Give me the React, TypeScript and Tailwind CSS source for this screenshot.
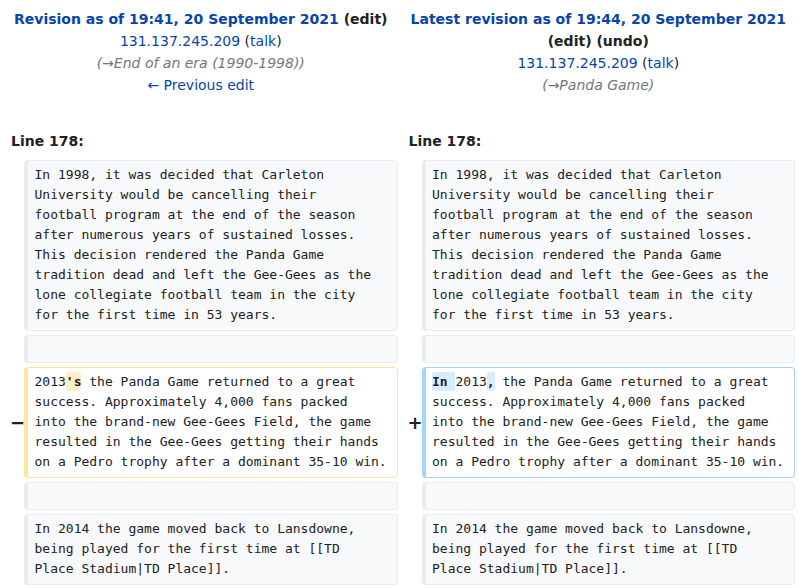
import React from 'react'

const sans = { fontFamily: '"DejaVu Sans", sans-serif' }
const mono = { fontFamily: '"DejaVu Sans Mono", monospace' }

const firstPara = [
    'In 1998, it was decided that Carleton',
    'University would be cancelling their',
    'football program at the end of the season',
    'after numerous years of sustained losses.',
    'This decision rendered the Panda Game',
    'tradition dead and left the Gee-Gees as the',
    'lone collegiate football team in the city',
    'for the first time in 53 years.',
].join('\n')

const lastPara = [
    'In 2014 the game moved back to Lansdowne,',
    'being played for the first time at [[TD',
    'Place Stadium|TD Place]].',
].join('\n')

const restOfPanda =
    ' the Panda Game returned to a great\nsuccess. Approximately 4,000 fans packed\ninto the brand-new Gee-Gees Field, the game\nresulted in the Gee-Gees getting their hands\non a Pedro trophy after a dominant 35-10 win.'

function Ctx({ children }: { children?: React.ReactNode }) {
    return (
        <div
            className="bg-[#f8f9fa] border border-[#eaecf0] border-l-4 rounded-[4px] px-[6.5px] pt-[4px] pb-[5px] text-[13px] leading-[20px] text-[#202122] min-h-[28px] whitespace-pre overflow-hidden"
            style={mono}
        >
            {children}
        </div>
    )
}

function Changed({ kind, children }: { kind: 'del' | 'add'; children: React.ReactNode }) {
    const border = kind === 'del' ? 'border-[#ffe49c]' : 'border-[#a3d3ff]'
    return (
        <div
            className={`bg-white border ${border} border-l-4 rounded-[4px] px-[6.5px] pt-[4px] pb-[5px] text-[13px] leading-[20px] text-[#202122] whitespace-pre overflow-hidden`}
            style={mono}
        >
            {children}
        </div>
    )
}

function Marker({ sign }: { sign: string }) {
    return (
        <div className="flex items-center pl-[6px] text-[18px] font-bold text-[#202122] whitespace-nowrap" style={sans}>
            {sign}
        </div>
    )
}

export default function App() {
    return (
        <div className="w-[799px] h-[588px] overflow-hidden bg-white text-[#202122] text-[14px]" style={sans}>
            {/* Revision headers */}
            <div className="grid grid-cols-[16px_1fr_16px_1fr] gap-x-[4px] px-[4px] pt-[8px]">
                <div className="col-span-2 text-center leading-[22px]">
                    <div className="font-bold">
                        <a className="text-[#0645ad]">Revision as of 19:41, 20 September 2021</a>{' '}
                        <span>(<a className="text-[#202122]">edit</a>)</span>
                    </div>
                    <div>
                        <a className="text-[#0645ad]">131.137.245.209</a> (<a className="text-[#0645ad]">talk</a>)
                    </div>
                    <div className="italic text-[#72777d]">(→End of an era (1990-1998))</div>
                    <div>
                        <a className="text-[#0645ad]">← Previous edit</a>
                    </div>
                </div>
                <div className="col-span-2 text-center leading-[22px]">
                    <div className="font-bold">
                        <a className="text-[#0645ad]">Latest revision as of 19:44, 20 September 2021</a>
                    </div>
                    <div className="font-bold">
                        (<a>edit</a>) (<a>undo</a>)
                    </div>
                    <div>
                        <a className="text-[#0645ad]">131.137.245.209</a> (<a className="text-[#0645ad]">talk</a>)
                    </div>
                    <div className="italic text-[#72777d]">(→Panda Game)</div>
                </div>
            </div>

            {/* Diff body */}
            <div className="grid grid-cols-[16px_1fr_16px_1fr] gap-x-[4px] gap-y-[4px] px-[4px] mt-[34px]">
                <div className="col-span-2 font-bold leading-[22px] px-[7px] mb-[4px]">Line 178:</div>
                <div className="col-span-2 font-bold leading-[22px] px-[7px] mb-[4px]">Line 178:</div>

                <div />
                <Ctx>{firstPara}</Ctx>
                <div />
                <Ctx>{firstPara}</Ctx>

                <div />
                <Ctx />
                <div />
                <Ctx />

                <Marker sign="−" />
                <Changed kind="del">
                    2013<span className="bg-[#feeec8] font-bold rounded-[3px] py-[2px]">'s</span>
                    {restOfPanda}
                </Changed>
                <Marker sign="+" />
                <Changed kind="add">
                    <span className="bg-[#d8ecff] font-bold rounded-[3px] py-[2px]">In </span>2013
                    <span className="bg-[#d8ecff] font-bold rounded-[3px] py-[2px]">,</span>
                    {restOfPanda}
                </Changed>

                <div />
                <Ctx />
                <div />
                <Ctx />

                <div />
                <Ctx>{lastPara}</Ctx>
                <div />
                <Ctx>{lastPara}</Ctx>
            </div>
        </div>
    )
}
